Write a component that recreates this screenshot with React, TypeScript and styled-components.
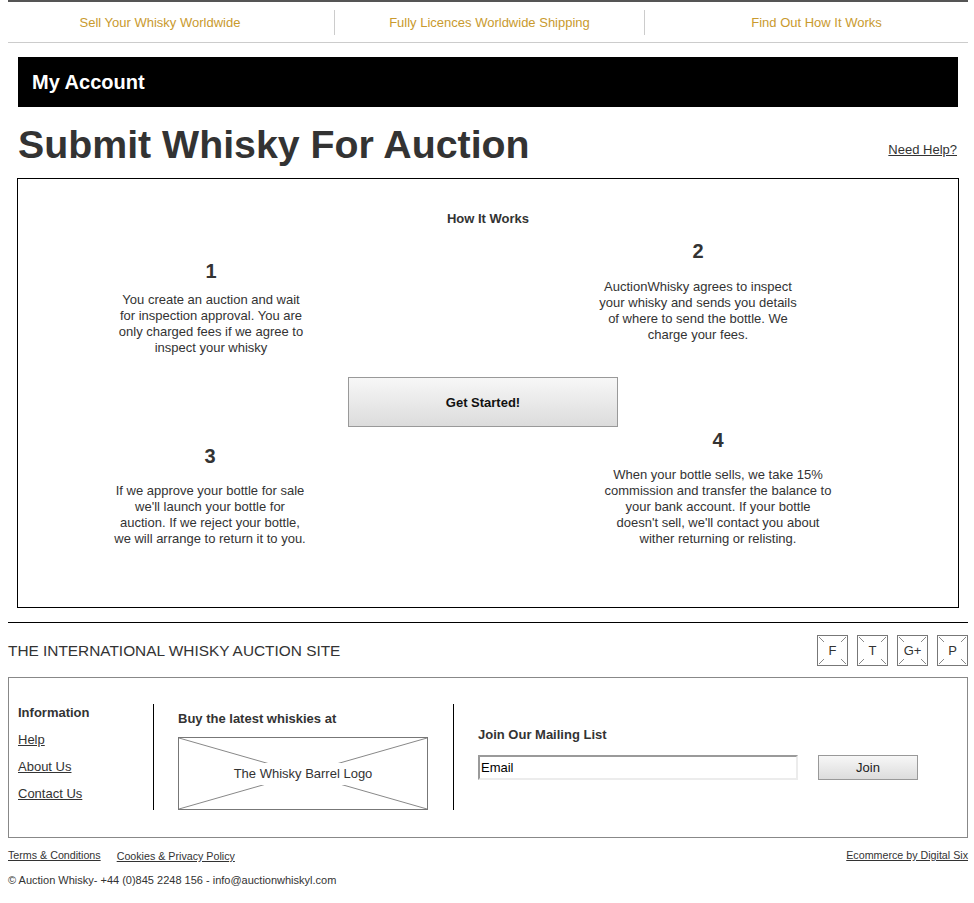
import styled, { createGlobalStyle } from "styled-components";

const GlobalStyle = createGlobalStyle`
    body {
        margin: 0;
        background: #fff;
        font-family: "Liberation Sans", Arial, sans-serif;
        color: #333;
    }
`

const Page = styled.div`
    width: 960px;
    margin-left: 8px;
`

const TopStrip = styled.div`
    height: 2px;
    background: #555;
`

const NavBar = styled.div`
    height: 40px;
    display: flex;
    align-items: center;
    border-bottom: 1px solid #ccc;
`

const NavCell = styled.div<{ $w: number; $pl?: number; $pr?: number }>`
    width: ${p => p.$w}px;
    padding-left: ${p => p.$pl || 0}px;
    padding-right: ${p => p.$pr || 0}px;
    box-sizing: border-box;
    display: flex;
    justify-content: center;
    font-size: 13px;
    color: #c99a2e;
    white-space: nowrap;
`

const NavDivider = styled.div`
    width: 1px;
    height: 25px;
    background: #ccc;
`

const AccountBar = styled.div`
    margin: 14px 10px 0;
    height: 50px;
    background: #000;
    color: #fff;
    display: flex;
    align-items: center;
    padding-left: 14px;
    font-size: 20px;
    font-weight: bold;
`

const TitleRow = styled.div`
    display: flex;
    justify-content: space-between;
    align-items: flex-end;
    margin: 18px 11px 0 10px;
`

const Title = styled.h1`
    margin: 0;
    font-size: 39.3px;
    line-height: 39px;
    font-weight: bold;
    color: #333;
`

const HelpLink = styled.a`
    font-size: 13px;
    line-height: 16px;
    color: #333;
    text-decoration: underline;
    margin-bottom: 6px;
    cursor: pointer;
`

const HowBox = styled.div`
    margin: 14px 0 0 9px;
    width: 942px;
    box-sizing: border-box;
    border: 1px solid #000;
    padding: 32px 0 60px;
`

const HowTitle = styled.div`
    text-align: center;
    font-size: 13px;
    line-height: 16px;
    font-weight: bold;
    color: #333;
`

const StepRow = styled.div<{ $mt: number }>`
    display: flex;
    align-items: flex-start;
    margin-top: ${p => p.$mt}px;
`

const Step = styled.div<{ $w: number; $ml: number; $pt?: number }>`
    width: ${p => p.$w}px;
    margin-left: ${p => p.$ml}px;
    padding-top: ${p => p.$pt || 0}px;
    text-align: center;
`

const StepNumber = styled.div`
    font-size: 20px;
    line-height: 20px;
    font-weight: bold;
    color: #333;
`

const StepText = styled.div<{ $gap: number }>`
    margin-top: ${p => p.$gap}px;
    font-size: 13px;
    line-height: 16px;
    color: #333;
    white-space: nowrap;
`

const StartButton = styled.button`
    display: block;
    margin: 21px 0 0 330px;
    width: 270px;
    height: 50px;
    border: 1px solid #999;
    background: linear-gradient(#f7f7f7, #dcdcdc);
    font-family: inherit;
    font-size: 13px;
    font-weight: bold;
    color: #111;
    cursor: pointer;
`

const Rule = styled.div`
    margin-top: 14px;
    height: 1px;
    background: #000;
`

const SiteRow = styled.div`
    margin-top: 12px;
    display: flex;
    justify-content: space-between;
    align-items: center;
`

const SiteName = styled.div`
    font-size: 15.4px;
    color: #333;
`

const Socials = styled.div`
    display: flex;
    gap: 9px;
`

const SocialBox = styled.div`
    position: relative;
    width: 31px;
    height: 31px;
    box-sizing: border-box;
    border: 1px solid #777;
    display: flex;
    align-items: center;
    justify-content: center;
    font-size: 13px;
    color: #333;
`

const CornerMarks = styled.svg`
    position: absolute;
    inset: 0;
`

const FooterBox = styled.div`
    margin-top: 11px;
    border: 1px solid #888;
    padding: 26px 0 27px 9px;
    display: flex;
`

const FooterCol = styled.div<{ $w?: number; $pt?: number; $divided?: boolean }>`
    ${p => p.$w ? `width: ${p.$w}px;` : "flex: 1;"}
    box-sizing: border-box;
    padding-top: ${p => p.$pt || 0}px;
    padding-left: ${p => p.$divided ? 24 : 0}px;
    border-left: ${p => p.$divided ? "1px solid #000" : "none"};
    min-height: 105px;
`

const ColTitle = styled.div`
    font-size: 13px;
    line-height: 18px;
    font-weight: bold;
    color: #333;
`

const FooterLink = styled.a`
    display: block;
    margin-top: 9px;
    font-size: 13px;
    line-height: 18px;
    color: #333;
    text-decoration: underline;
    cursor: pointer;
`

const LogoBox = styled.div`
    position: relative;
    margin-top: 9px;
    width: 250px;
    height: 73px;
    box-sizing: border-box;
    border: 1px solid #777;
    display: flex;
    align-items: center;
    justify-content: center;
`

const LogoLines = styled.svg`
    position: absolute;
    inset: 0;
`

const LogoLabel = styled.span`
    position: relative;
    background: #fff;
    font-size: 13px;
    line-height: 22px;
    color: #333;
    padding: 0 4px;
`

const MailRow = styled.div`
    margin-top: 11px;
    display: flex;
    align-items: center;
    gap: 20px;
`

const EmailInput = styled.div`
    width: 320px;
    height: 25px;
    box-sizing: border-box;
    border-style: solid;
    border-width: 2px;
    border-color: #9a9a9a #ececec #ececec #9a9a9a;
    padding-left: 1px;
    display: flex;
    align-items: center;
    font-size: 13px;
    color: #000;
`

const JoinButton = styled.button`
    width: 100px;
    height: 25px;
    border: 1px solid #999;
    background: linear-gradient(#f7f7f7, #dcdcdc);
    font-family: inherit;
    font-size: 13px;
    color: #222;
    cursor: pointer;
`

const LegalRow = styled.div`
    margin-top: 10px;
    display: flex;
    justify-content: space-between;
    align-items: flex-start;
`

const LegalLinks = styled.div`
    display: flex;
    gap: 16px;
`

const SmallLink = styled.a<{ $mt?: number }>`
    margin-top: ${p => p.$mt || 0}px;
    font-size: 10.7px;
    line-height: 14px;
    color: #333;
    text-decoration: underline;
    cursor: pointer;
`

const Copyright = styled.div`
    margin-top: 10px;
    font-size: 11px;
    line-height: 14px;
    color: #333;
`

const steps = {
    one: ["You create an auction and wait", "for inspection approval. You are", "only charged fees if we agree to", "inspect your whisky"],
    two: ["AuctionWhisky agrees to inspect", "your whisky and sends you details", "of where to send the bottle. We", "charge your fees."],
    three: ["If we approve your bottle for sale", "we'll launch your bottle for", "auction. If we reject your bottle,", "we will arrange to return it to you."],
    four: ["When your bottle sells, we take 15%", "commission and transfer the balance to", "your bank account. If your bottle", "doesn't sell, we'll contact you about", "wither returning or relisting."],
}

const Lines = ({ lines }: { lines: string[] }) => (
    <>
        {lines.map((l, i) => <div key={i}>{l}</div>)}
    </>
)

const Social = ({ label }: { label: string }) => (
    <SocialBox>
        <CornerMarks width="29" height="29" viewBox="0 0 29 29">
            <g stroke="#888" strokeWidth="1">
                <line x1="1" y1="1" x2="6" y2="6" />
                <line x1="28" y1="1" x2="23" y2="6" />
                <line x1="1" y1="28" x2="6" y2="23" />
                <line x1="28" y1="28" x2="23" y2="23" />
            </g>
        </CornerMarks>
        {label}
    </SocialBox>
)

export default function App() {
    return (
        <Page>
            <GlobalStyle />
            <TopStrip />
            <NavBar>
                <NavCell $w={326} $pr={22}>Sell Your Whisky Worldwide</NavCell>
                <NavDivider />
                <NavCell $w={309}>Fully Licences Worldwide Shipping</NavCell>
                <NavDivider />
                <NavCell $w={323} $pl={20}>Find Out How It Works</NavCell>
            </NavBar>

            <AccountBar>My Account</AccountBar>

            <TitleRow>
                <Title>Submit Whisky For Auction</Title>
                <HelpLink>Need Help?</HelpLink>
            </TitleRow>

            <HowBox>
                <HowTitle>How It Works</HowTitle>
                <StepRow $mt={14}>
                    <Step $w={200} $ml={93} $pt={20}>
                        <StepNumber>1</StepNumber>
                        <StepText $gap={11}><Lines lines={steps.one} /></StepText>
                    </Step>
                    <Step $w={220} $ml={277}>
                        <StepNumber>2</StepNumber>
                        <StepText $gap={18}><Lines lines={steps.two} /></StepText>
                    </Step>
                </StepRow>
                <StartButton>Get Started!</StartButton>
                <StepRow $mt={3}>
                    <Step $w={200} $ml={92} $pt={16}>
                        <StepNumber>3</StepNumber>
                        <StepText $gap={17}><Lines lines={steps.three} /></StepText>
                    </Step>
                    <Step $w={240} $ml={288}>
                        <StepNumber>4</StepNumber>
                        <StepText $gap={17}><Lines lines={steps.four} /></StepText>
                    </Step>
                </StepRow>
            </HowBox>

            <Rule />

            <SiteRow>
                <SiteName>THE INTERNATIONAL WHISKY AUCTION SITE</SiteName>
                <Socials>
                    <Social label="F" />
                    <Social label="T" />
                    <Social label="G+" />
                    <Social label="P" />
                </Socials>
            </SiteRow>

            <FooterBox>
                <FooterCol $w={135}>
                    <ColTitle>Information</ColTitle>
                    <FooterLink>Help</FooterLink>
                    <FooterLink>About Us</FooterLink>
                    <FooterLink>Contact Us</FooterLink>
                </FooterCol>
                <FooterCol $w={300} $pt={6} $divided>
                    <ColTitle>Buy the latest whiskies at</ColTitle>
                    <LogoBox>
                        <LogoLines width="248" height="71" viewBox="0 0 248 71" preserveAspectRatio="none">
                            <g stroke="#888" strokeWidth="1">
                                <line x1="0" y1="0" x2="248" y2="71" />
                                <line x1="248" y1="0" x2="0" y2="71" />
                            </g>
                        </LogoLines>
                        <LogoLabel>The Whisky Barrel Logo</LogoLabel>
                    </LogoBox>
                </FooterCol>
                <FooterCol $pt={22} $divided>
                    <ColTitle>Join Our Mailing List</ColTitle>
                    <MailRow>
                        <EmailInput>Email</EmailInput>
                        <JoinButton>Join</JoinButton>
                    </MailRow>
                </FooterCol>
            </FooterBox>

            <LegalRow>
                <LegalLinks>
                    <SmallLink>Terms &amp; Conditions</SmallLink>
                    <SmallLink $mt={1}>Cookies &amp; Privacy Policy</SmallLink>
                </LegalLinks>
                <SmallLink>Ecommerce by Digital Six</SmallLink>
            </LegalRow>
            <Copyright>© Auction Whisky- +44 (0)845 2248 156 - info@auctionwhiskyl.com</Copyright>
        </Page>
    )
}
